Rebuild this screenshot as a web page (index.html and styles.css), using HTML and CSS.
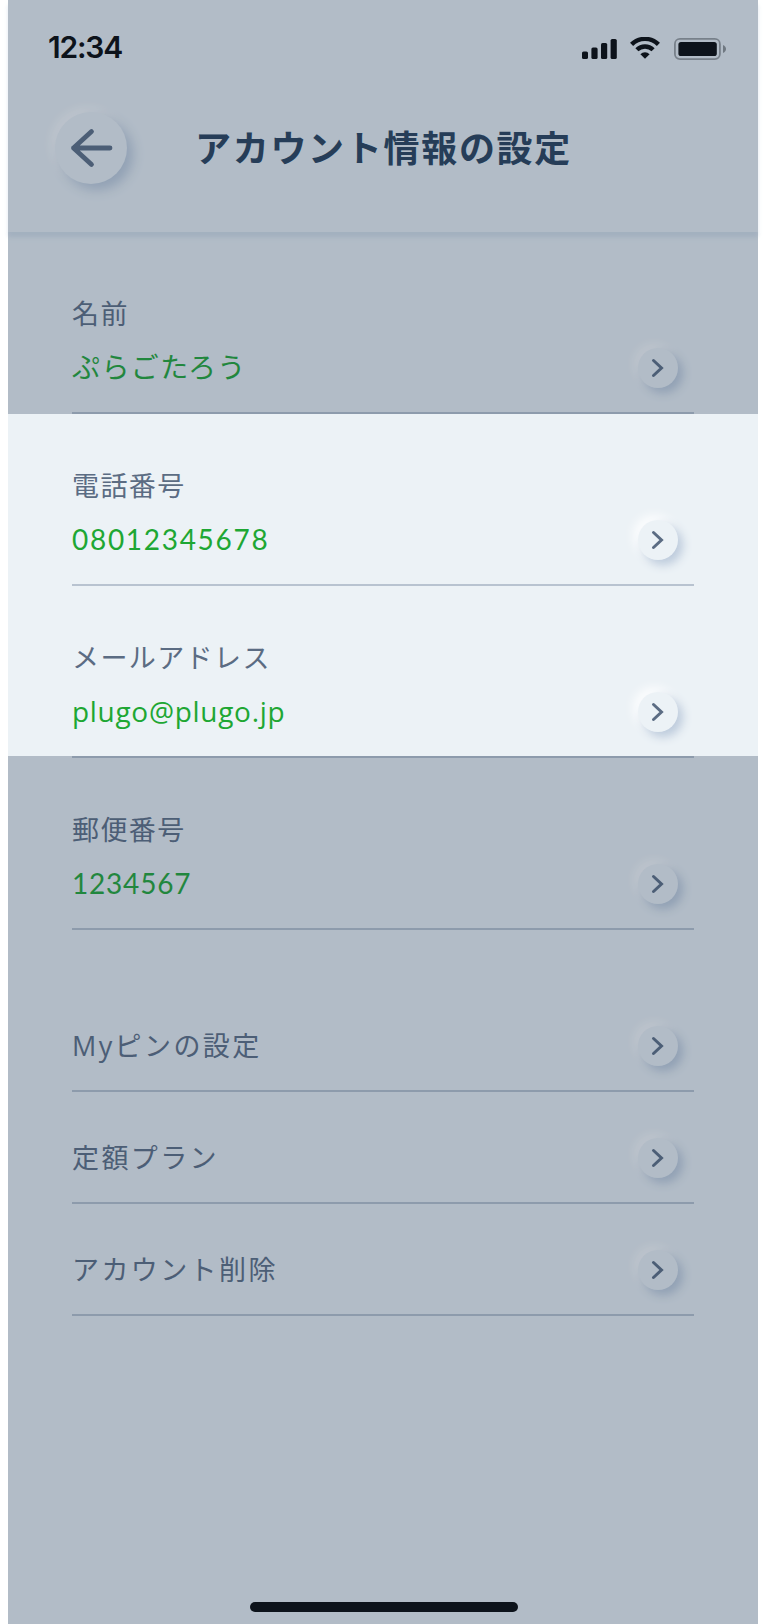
FILE: index.html
```html
<!DOCTYPE html>
<html lang="ja">
<head>
    <meta charset="UTF-8">
    <title>アカウント情報の設定</title>
    <link rel="stylesheet" href="styles.css">
</head>
<body>
    <svg width="0" height="0" class="defs">
        <symbol id="chevron" viewBox="0 0 40 40">
            <path d="M15.5 12.5 L23.5 20 L15.5 27.5" fill="none" stroke="#5b6c83" stroke-width="3" stroke-linecap="round" stroke-linejoin="miter"/>
        </symbol>
    </svg>

    <div class="phone">
        <header class="header">
            <div class="status-bar">
                <div class="time">12:34</div>
                <div class="status-icons">
                    <svg class="signal" width="35" height="20" viewBox="0 0 35 20">
                        <rect x="0" y="12.5" width="6" height="7.5" rx="1.6"/>
                        <rect x="9.4" y="8.5" width="6.2" height="11.5" rx="1.6"/>
                        <rect x="19" y="4" width="6.2" height="16" rx="1.6"/>
                        <rect x="28.6" y="0" width="6.2" height="20" rx="1.6"/>
                    </svg>
                    <svg class="wifi" width="30" height="22" viewBox="0 0 30 22">
                        <path d="M1.6 7.4 A19 19 0 0 1 28.4 7.4" fill="none" stroke="#000" stroke-width="4.4"/>
                        <path d="M6.9 12.8 A11.6 11.6 0 0 1 23.1 12.8" fill="none" stroke="#000" stroke-width="4.4"/>
                        <path d="M10.4 17.2 A6.6 6.6 0 0 1 19.6 17.2 L15 21.8 Z"/>
                    </svg>
                    <svg class="battery" width="52" height="22" viewBox="0 0 52 22">
                        <rect x="0.9" y="0.9" width="45" height="20.2" rx="5" fill="none" stroke="#000" stroke-opacity="0.35" stroke-width="1.8"/>
                        <rect x="4.4" y="4" width="38.4" height="14" rx="2.6"/>
                        <path d="M49 7 C53 8.5 53 13.5 49 15 Z" fill-opacity="0.4"/>
                    </svg>
                </div>
            </div>
            <div class="title-bar">
                <div class="back-btn">
                    <svg width="72" height="72" viewBox="0 0 72 72">
                        <path d="M36.5 19.5 L18.5 36 L36.5 52.5 M18.5 36 H55" fill="none" stroke="#5b6c83" stroke-width="4.8" stroke-linecap="round" stroke-linejoin="round"/>
                    </svg>
                </div>
                <h1 class="title">アカウント情報の設定</h1>
            </div>
        </header>

        <main class="list">
            <div class="row">
                <div class="texts">
                    <div class="label">名前</div>
                    <div class="value kana">ぷらごたろう</div>
                </div>
                <div class="btn"><svg width="40" height="40"><use href="#chevron"/></svg></div>
            </div>
            <div class="row">
                <div class="texts">
                    <div class="label">電話番号</div>
                    <div class="value tel">08012345678</div>
                </div>
                <div class="btn"><svg width="40" height="40"><use href="#chevron"/></svg></div>
            </div>
            <div class="row">
                <div class="texts">
                    <div class="label">メールアドレス</div>
                    <div class="value mail">plugo@plugo.jp</div>
                </div>
                <div class="btn"><svg width="40" height="40"><use href="#chevron"/></svg></div>
            </div>
            <div class="row">
                <div class="texts">
                    <div class="label">郵便番号</div>
                    <div class="value zip">1234567</div>
                </div>
                <div class="btn"><svg width="40" height="40"><use href="#chevron"/></svg></div>
            </div>

            <div class="row single first">
                <div class="label">Myピンの設定</div>
                <div class="btn"><svg width="40" height="40"><use href="#chevron"/></svg></div>
            </div>
            <div class="row single">
                <div class="label">定額プラン</div>
                <div class="btn"><svg width="40" height="40"><use href="#chevron"/></svg></div>
            </div>
            <div class="row single">
                <div class="label">アカウント削除</div>
                <div class="btn"><svg width="40" height="40"><use href="#chevron"/></svg></div>
            </div>
        </main>

        <div class="home-bar"></div>

        <!-- dims everything except the highlighted rows -->
        <div class="overlay">
            <div class="spotlight"></div>
        </div>
    </div>
</body>
</html>
```
FILE: styles.css
```css
* {
    box-sizing: border-box;
}

body {
    margin: 0;
    background: #fff;
    font-family: "Open Sans", "Noto Sans CJK JP", sans-serif;
}

svg {
    display: block;
}

.defs {
    position: absolute;
}

.phone {
    position: relative;
    display: flex;
    flex-direction: column;
    width: 750px;
    height: 1624px;
    margin-left: 8px;
    background: #ecf2f6;
}

/* Header */
.header {
    height: 232px;
    background: #ecf2f6;
    box-shadow: 0 5px 4px rgba(200, 213, 229, 0.6);
}

.status-bar {
    display: flex;
    justify-content: space-between;
    height: 96px;
    padding: 28px 32px 0 40px;
}

.time {
    font-family: Inter, sans-serif;
    font-size: 30px;
    font-weight: 600;
    line-height: 39px;
    letter-spacing: -1.2px;
    color: #000;
}

.status-icons {
    display: flex;
    height: 32px;
    align-items: flex-end;
}

.signal {
    margin-bottom: 1px;
}

.wifi {
    margin-left: 13px;
    margin-bottom: 1px;
}

.battery {
    margin-left: 14px;
}

.title-bar {
    display: flex;
    align-items: center;
    padding: 16px 0 0 47px;
}

.back-btn {
    width: 72px;
    height: 72px;
    border-radius: 50%;
    background: #ecf2f6;
    box-shadow: 6px 6px 12px #bdcbdc, -4px -4px 12px #fff;
}

.title {
    margin: 2px 0 0 68px;
    font-size: 36px;
    line-height: 54px;
    font-weight: 700;
    letter-spacing: 1.7px;
    color: #253d58;
}

/* Rows */
.list {
    flex: 1;
    padding: 10px 64px 0;
}

.row {
    display: flex;
    justify-content: space-between;
    align-items: flex-end;
    height: 172px;
    padding: 0 16px 17px 0;
    border-bottom: 2px solid #b8c3d0;
}

.row.single {
    height: 112px;
}

.row.first {
    height: 162px;
}

.label {
    font-size: 27px;
    line-height: 54px;
    letter-spacing: 1.4px;
    color: #5b6c83;
}

.single .label {
    letter-spacing: 2.4px;
}

.value {
    margin-bottom: 2px;
    font-size: 28px;
    line-height: 52px;
    color: #1ea733;
}

.value.kana {
    letter-spacing: 1.4px;
}

.value.tel {
    font-family: Lato, sans-serif;
    letter-spacing: 1.7px;
}

.value.zip {
    font-family: Lato, sans-serif;
    letter-spacing: 0.8px;
}

.value.mail {
    letter-spacing: 0.7px;
}

.btn {
    width: 40px;
    height: 40px;
    margin-bottom: 7px;
    border-radius: 50%;
    background: #ecf2f6;
    box-shadow: 5px 5px 10px #bdcbdc, -4px -4px 12px #fff;
}

.home-bar {
    width: 268px;
    height: 10px;
    margin: 0 0 12px 242px;
    border-radius: 5px;
    background: #000;
}

/* Overlay */
.overlay {
    position: absolute;
    inset: 0;
    overflow: hidden;
}

.spotlight {
    position: absolute;
    top: 414px;
    left: 0;
    width: 750px;
    height: 342px;
    box-shadow: 0 0 0 1000px rgba(43, 64, 88, 0.3);
}
```
